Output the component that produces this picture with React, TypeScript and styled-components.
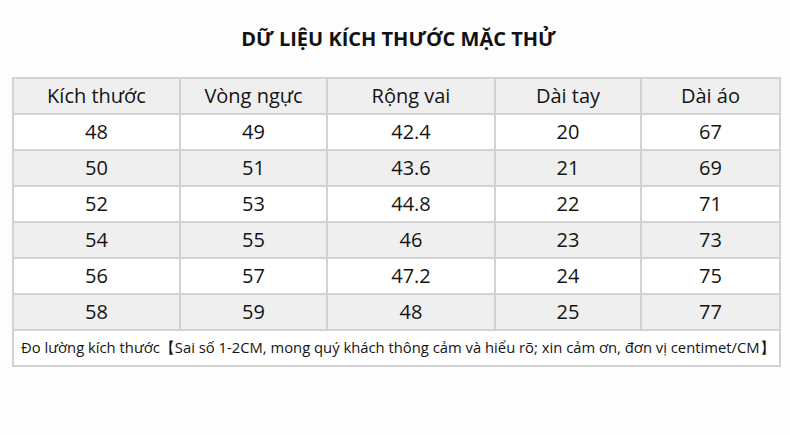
import React from "react";
import styled, { createGlobalStyle } from "styled-components";

const Global = createGlobalStyle`
  html, body { margin: 0; padding: 0; background: #fdfdfd; }
  body { font-family: "Open Sans", "Noto Sans", sans-serif; color: #111; }
`;

const Page = styled.div`
  width: 790px;
  height: 435px;
  padding: 26px 11px 0 12px;
  box-sizing: border-box;
  display: flex;
  flex-direction: column;
  align-items: stretch;
`;

const Title = styled.h1`
  margin: 0 0 25px 0;
  text-align: center;
  font-size: 20px;
  line-height: 26px;
  font-weight: 700;
  color: #111;
  padding-left: 6px;
`;

const Table = styled.table`
  width: 767px;
  border-collapse: collapse;
  table-layout: fixed;
  border: 2px solid #cdcdcd;
`;

const Row = styled.tr<{ $shade?: boolean }>`
  background: ${(p) => (p.$shade ? "#efefef" : "#ffffff")};
  height: 36px;
`;

const Cell = styled.td`
  border: 2px solid #d2d2d2;
  text-align: center;
  vertical-align: middle;
  font-size: 20px;
  line-height: 24px;
  padding: 0;
  color: #141414;
`;

const Note = styled.td`
  border: 2px solid #d2d2d2;
  text-align: left;
  font-size: 14.8px;
  line-height: 20px;
  padding: 0 0 2px 7px;
  color: #141414;
  white-space: nowrap;
`;

const headers = ["Kích thước", "Vòng ngực", "Rộng vai", "Dài tay", "Dài áo"];
const widths = [167, 147, 168, 146, 139];
const rows = [
  ["48", "49", "42.4", "20", "67"],
  ["50", "51", "43.6", "21", "69"],
  ["52", "53", "44.8", "22", "71"],
  ["54", "55", "46", "23", "73"],
  ["56", "57", "47.2", "24", "75"],
  ["58", "59", "48", "25", "77"],
];

export default function App() {
  return (
    <>
      <Global />
      <Page>
        <Title>DỮ LIỆU KÍCH THƯỚC MẶC THỬ</Title>
        <Table>
          <colgroup>
            {widths.map((w, i) => (
              <col key={i} style={{ width: w }} />
            ))}
          </colgroup>
          <tbody>
            <Row $shade>
              {headers.map((h) => (
                <Cell key={h}>{h}</Cell>
              ))}
            </Row>
            {rows.map((r, i) => (
              <Row key={i} $shade={i % 2 === 1}>
                {r.map((c, j) => (
                  <Cell key={j}>{c}</Cell>
                ))}
              </Row>
            ))}
            <Row>
              <Note colSpan={5}>
                Đo lường kích thước【Sai số 1-2CM, mong quý khách thông cảm và hiểu rõ; xin cảm ơn, đơn vị centimet/CM】
              </Note>
            </Row>
          </tbody>
        </Table>
      </Page>
    </>
  );
}
